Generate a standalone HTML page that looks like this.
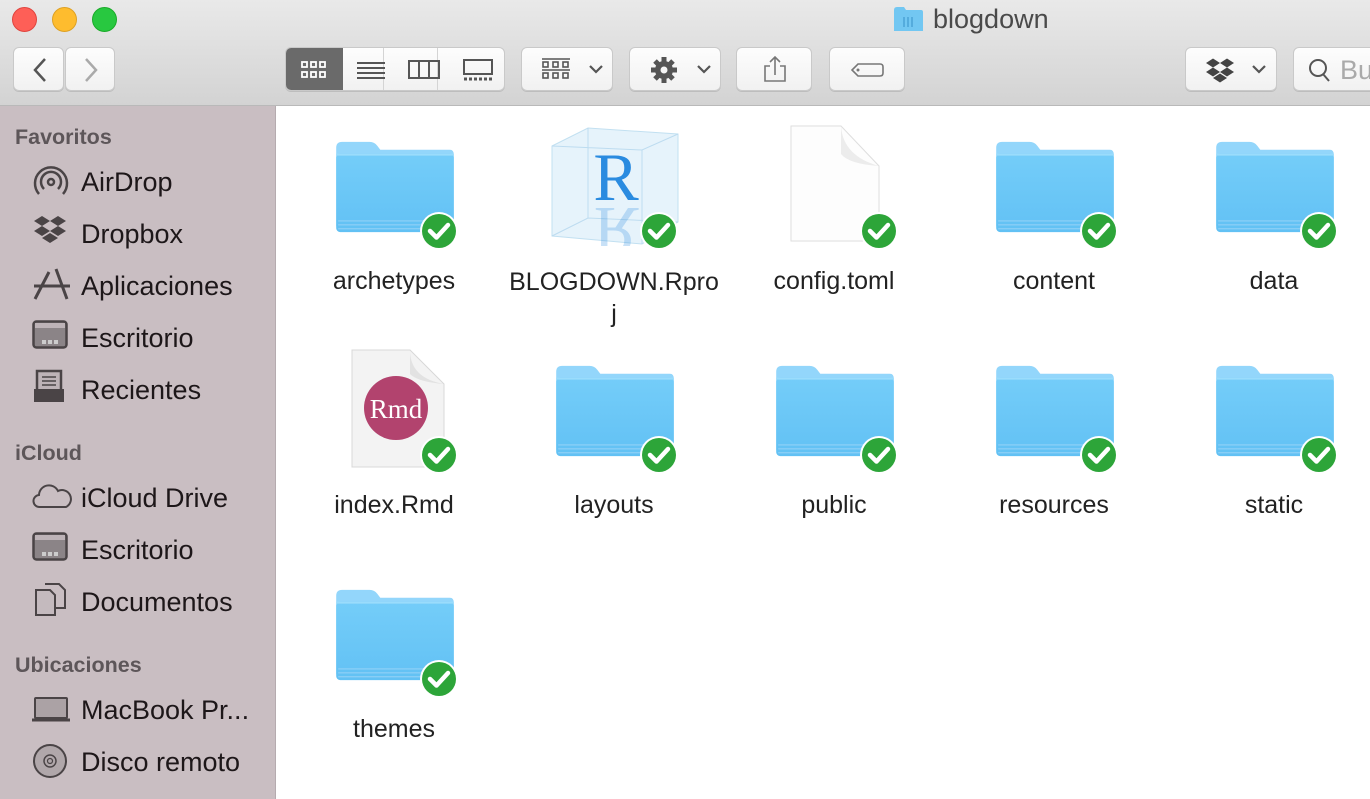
<!DOCTYPE html>
<html><head><meta charset="utf-8">
<style>
*{margin:0;padding:0;box-sizing:border-box}
body{width:1370px;height:799px;overflow:hidden;position:relative;font-family:"Liberation Sans",sans-serif;background:#fff}
.tb{position:absolute;left:0;top:0;width:1370px;height:106px;background:linear-gradient(#e9e9e9,#d3d3d3);border-bottom:1px solid #b9b9b9}
.light{position:absolute;top:7px;width:25px;height:25px;border-radius:50%}
.btn{position:absolute;top:47px;height:44px;background:linear-gradient(#fdfdfd,#f1f1f1);border:1px solid #c9c9c9;border-radius:6px;box-shadow:0 1px 0 #bdbdbd}
.title{position:absolute;left:933px;top:4px;font-size:27px;color:#4a4a4a}
.side{position:absolute;left:0;top:106px;width:276px;height:693px;background:#c9bec2;border-right:1px solid #b5abaf}
.sh{position:absolute;left:15px;font-size:21.5px;color:#5d5659;font-weight:bold}
.si{position:absolute;left:81px;font-size:27px;color:#1d1719;line-height:32px}
.ic{position:absolute;left:32px}
.lbl{position:absolute;width:220px;text-align:center;font-size:25px;color:#222;line-height:30px}
.it{position:absolute}
</style></head><body>
<svg width="0" height="0" style="position:absolute">
<defs>
<linearGradient id="fg" x1="0" y1="0" x2="0" y2="1"><stop offset="0" stop-color="#74cdf9"/><stop offset="1" stop-color="#62c1f4"/></linearGradient>
<symbol id="folder" viewBox="0 0 124 100">
<path d="M2 10 Q2 4 8 4 L36 4 Q41 4 44 8 L47 12 L118 12 Q122 12 122 17 L122 90 L2 90 Z" fill="#93d6fb"/>
<rect x="2" y="16" width="120" height="80" rx="4" fill="url(#fg)"/>
<rect x="2" y="16" width="120" height="2" fill="#9adcfc"/>
<rect x="4" y="84" width="116" height="1.2" fill="#8fd0f7"/>
<rect x="4" y="88" width="116" height="1.2" fill="#8fd0f7"/>
<rect x="4" y="92" width="116" height="1.2" fill="#8fd0f7"/>
</symbol>
<symbol id="chk" viewBox="0 0 40 40">
<circle cx="20" cy="20" r="19" fill="#fff"/>
<circle cx="20" cy="20" r="17" fill="#2da539"/>
<path d="M11 20 L17.5 26.5 L29 14" stroke="#fff" stroke-width="4.5" fill="none" stroke-linecap="round" stroke-linejoin="round"/>
</symbol>
</defs></svg>

<div class="tb">
<div class="light" style="left:12px;background:#fe5f57;border:1px solid #e0443e"></div>
<div class="light" style="left:52px;background:#febc2e;border:1px solid #dea123"></div>
<div class="light" style="left:92px;background:#28c840;border:1px solid #1aab29"></div>
<svg style="position:absolute;left:894px;top:7px" width="29" height="24"><path d="M0 3 Q0 0 3 0 L10 0 L12 3 L27 3 Q29 3 29 5 L29 24 L0 24Z" fill="#72c7f2"/><path d="M10 10v10M14 10v10M18 10v10" stroke="#4aa4d6" stroke-width="1.5"/></svg>
<div class="title">blogdown</div>
<div class="btn" style="left:13px;width:51px"><svg width="51" height="44"><path d="M31 11 L21 22 L31 33" stroke="#555" stroke-width="2.5" fill="none"/></svg></div>
<div class="btn" style="left:65px;width:50px"><svg width="50" height="44"><path d="M20 11 L30 22 L20 33" stroke="#aaa" stroke-width="2.5" fill="none"/></svg></div>
<div class="btn" style="left:285px;width:220px;overflow:hidden">
<div style="position:absolute;left:0;top:0;width:57px;height:44px;background:#6a6a6a"></div>
<div style="position:absolute;left:97px;top:0;width:1px;height:44px;background:#d4d4d4"></div>
<div style="position:absolute;left:151px;top:0;width:1px;height:44px;background:#d4d4d4"></div>
<svg style="position:absolute;left:0;top:0" width="220" height="44">
<g fill="none" stroke="#fff" stroke-width="1.8"><rect x="16" y="14" width="5" height="5"/><rect x="25" y="14" width="5" height="5"/><rect x="34" y="14" width="5" height="5"/><rect x="16" y="24" width="5" height="5"/><rect x="25" y="24" width="5" height="5"/><rect x="34" y="24" width="5" height="5"/></g>
<g stroke="#555" stroke-width="2"><path d="M71 15h28M71 20h28M71 25h28M71 30h28"/></g>
<rect x="123" y="13" width="30" height="17" fill="none" stroke="#555" stroke-width="2"/><path d="M133 13v17M143 13v17" stroke="#555" stroke-width="2"/>
<rect x="178" y="12" width="28" height="14" fill="none" stroke="#555" stroke-width="2"/><path d="M178 31h28" stroke="#555" stroke-width="3" stroke-dasharray="3 2"/>
</svg></div>
<div class="btn" style="left:521px;width:92px"><svg width="92" height="44"><path d="M20 11h28M20 22h28" stroke="#555" stroke-width="1.5"/><g fill="none" stroke="#555" stroke-width="1.6"><rect x="21" y="14" width="5" height="5"/><rect x="31" y="14" width="5" height="5"/><rect x="41" y="14" width="5" height="5"/><rect x="21" y="25" width="5" height="5"/><rect x="31" y="25" width="5" height="5"/><rect x="41" y="25" width="5" height="5"/></g><path d="M68 18l6 6 6-6" stroke="#555" stroke-width="2.2" fill="none"/></svg></div>
<div class="btn" style="left:629px;width:92px"><svg width="92" height="44"><g transform="translate(34 22)"><circle r="9" fill="#555"/><g stroke="#555" stroke-width="5"><path d="M0 -13V13M-13 0H13M-9 -9L9 9M-9 9L9 -9"/></g><circle r="3.5" fill="#f5f5f5"/></g><path d="M68 18l6 6 6-6" stroke="#555" stroke-width="2.2" fill="none"/></svg></div>
<div class="btn" style="left:736px;width:76px"><svg width="76" height="44"><path d="M33 18h-5v15h20v-15h-5M38 27V9M33 14l5-5 5 5" stroke="#777" stroke-width="1.6" fill="none"/></svg></div>
<div class="btn" style="left:829px;width:76px"><svg width="76" height="44"><path d="M28 16h22q3 0 3 3v6q0 3-3 3h-22l-6-6z" stroke="#777" stroke-width="1.6" fill="none"/><circle cx="28" cy="22" r="1.5" fill="#777"/></svg></div>
<div class="btn" style="left:1185px;width:92px"><svg width="92" height="44"><g fill="#444"><path d="M20 15l7-4.5 7 4.5-7 4.5zM34 15l7-4.5 7 4.5-7 4.5zM20 24l7-4.5 7 4.5-7 4.5zM34 24l7-4.5 7 4.5-7 4.5zM27 30l7-4.5 7 4.5-7 4.5z"/></g><path d="M67 18l6 6 6-6" stroke="#555" stroke-width="2.2" fill="none"/></svg></div>
<div class="btn" style="left:1293px;width:90px"><svg width="90" height="44"><circle cx="24" cy="20" r="8" stroke="#555" stroke-width="2" fill="none"/><path d="M29 26l6 7" stroke="#555" stroke-width="2"/></svg><span style="position:absolute;left:46px;top:7px;font-size:27px;color:#aaa">Bu</span></div>
</div>

<div class="side">
<div class="sh" style="top:19px">Favoritos</div>
<svg class="ic" style="top:58px" width="38" height="36"><g fill="none" stroke="#4a4446" stroke-width="2.5"><circle cx="19" cy="18" r="3"/><path d="M12 25a10 10 0 1 1 14 0M7 30a16 16 0 1 1 24 0"/></g></svg>
<div class="si" style="top:60px">AirDrop</div>
<svg class="ic" style="top:108px" width="38" height="36"><g fill="#4a4446"><path d="M2 7l8-5 8 5-8 5zM18 7l8-5 8 5-8 5zM2 17l8-5 8 5-8 5zM18 17l8-5 8 5-8 5zM10 24l8-5 8 5-8 5z"/></g></svg>
<div class="si" style="top:112px">Dropbox</div>
<svg class="ic" style="top:160px" width="40" height="36"><g stroke="#4a4446" stroke-width="3" fill="none"><path d="M3 33L17 6M24 3l11 30M2 20h36"/></g></svg>
<div class="si" style="top:164px">Aplicaciones</div>
<svg class="ic" style="top:214px" width="38" height="32"><rect x="1.5" y="1.5" width="33" height="26" rx="3" fill="#8b8487" stroke="#4a4446" stroke-width="2.5"/><rect x="3" y="3" width="30" height="5" fill="#bdb3b7"/><g fill="#ccc"><rect x="10" y="20" width="4" height="4"/><rect x="16" y="20" width="4" height="4"/><rect x="22" y="20" width="4" height="4"/></g></svg>
<div class="si" style="top:216px">Escritorio</div>
<svg class="ic" style="top:263px" width="38" height="36"><path d="M5 2h24v20H5z" fill="#bdb3b7" stroke="#4a4446" stroke-width="2.5"/><path d="M10 8h14M10 12h14M10 16h14" stroke="#4a4446" stroke-width="1.5"/><path d="M2 20h30v13H2z" fill="#4a4446"/></svg>
<div class="si" style="top:268px">Recientes</div>
<div class="sh" style="top:335px">iCloud</div>
<svg class="ic" style="top:375px" width="40" height="30"><path d="M8 26a6 6 0 0 1-1-12 10 10 0 0 1 19-4 8 8 0 0 1 8 16z" fill="none" stroke="#4a4446" stroke-width="2"/></svg>
<div class="si" style="top:376px">iCloud Drive</div>
<svg class="ic" style="top:426px" width="38" height="32"><rect x="1.5" y="1.5" width="33" height="26" rx="3" fill="#8b8487" stroke="#4a4446" stroke-width="2.5"/><rect x="3" y="3" width="30" height="5" fill="#bdb3b7"/><g fill="#ccc"><rect x="10" y="20" width="4" height="4"/><rect x="16" y="20" width="4" height="4"/><rect x="22" y="20" width="4" height="4"/></g></svg>
<div class="si" style="top:428px">Escritorio</div>
<svg class="ic" style="top:476px" width="38" height="36"><path d="M4 8h14l5 5v20H4z" fill="#c4babe" stroke="#4a4446" stroke-width="2"/><path d="M13 2h14l6 6v18H23" fill="none" stroke="#4a4446" stroke-width="2"/></svg>
<div class="si" style="top:480px">Documentos</div>
<div class="sh" style="top:547px">Ubicaciones</div>
<svg class="ic" style="top:590px" width="40" height="28"><rect x="3" y="2" width="32" height="20" rx="1" fill="#aba2a5" stroke="#4a4446" stroke-width="2"/><path d="M0 24h38" stroke="#4a4446" stroke-width="3"/></svg>
<div class="si" style="top:588px">MacBook Pr...</div>
<svg class="ic" style="top:636px" width="38" height="38"><circle cx="18" cy="19" r="16" fill="#b0a7aa" stroke="#4a4446" stroke-width="2"/><circle cx="18" cy="19" r="6" fill="none" stroke="#4a4446" stroke-width="1.5"/><circle cx="18" cy="19" r="2.5" fill="none" stroke="#4a4446" stroke-width="1.2"/></svg>
<div class="si" style="top:640px">Disco remoto</div>
</div>

<svg class="it" style="left:334px;top:138px" width="122" height="98"><use href="#folder"/></svg>
<svg class="it" style="left:550px;top:126px" width="130" height="120"><path d="M2 20L38 2 128 8 128 96 92 118 2 110Z" fill="#e6f3fb" stroke="#c2e0f1"/><path d="M38 2v90M2 110L38 92 128 96M92 118V24M2 20L92 24 128 8" stroke="#bddcf0" fill="none"/><text x="66" y="74" font-family="Liberation Serif,serif" font-size="68" fill="#2a8be0" text-anchor="middle">R</text><text x="66" y="78" font-family="Liberation Serif,serif" font-size="68" fill="#2a8be0" opacity=".25" text-anchor="middle" transform="scale(1,-1) translate(0,-160)">R</text></svg>
<svg class="it" style="left:789px;top:124px" width="92" height="120"><path d="M2 2h50l38 40v75H2z" fill="#fdfdfd" stroke="#dedede"/><path d="M52 2q2 30 38 40q-30-2-38-12z" fill="#ececec"/></svg>
<svg class="it" style="left:994px;top:138px" width="122" height="98"><use href="#folder"/></svg>
<svg class="it" style="left:1214px;top:138px" width="122" height="98"><use href="#folder"/></svg>
<svg class="it" style="left:350px;top:348px" width="96" height="122"><path d="M2 2h58l34 34v83H2z" fill="#f3f3f3" stroke="#d8d8d8"/><path d="M60 2q0 28 34 34q-26-2-34-10z" fill="#e2e2e2"/><circle cx="46" cy="60" r="32" fill="#b2436e"/><text x="46" y="70" font-family="Liberation Serif,serif" font-size="27" fill="#fff" text-anchor="middle">Rmd</text></svg>
<svg class="it" style="left:554px;top:362px" width="122" height="98"><use href="#folder"/></svg>
<svg class="it" style="left:774px;top:362px" width="122" height="98"><use href="#folder"/></svg>
<svg class="it" style="left:994px;top:362px" width="122" height="98"><use href="#folder"/></svg>
<svg class="it" style="left:1214px;top:362px" width="122" height="98"><use href="#folder"/></svg>
<svg class="it" style="left:334px;top:586px" width="122" height="98"><use href="#folder"/></svg>

<svg class="it" style="left:419px;top:211px" width="40" height="40"><use href="#chk"/></svg>
<svg class="it" style="left:639px;top:211px" width="40" height="40"><use href="#chk"/></svg>
<svg class="it" style="left:859px;top:211px" width="40" height="40"><use href="#chk"/></svg>
<svg class="it" style="left:1079px;top:211px" width="40" height="40"><use href="#chk"/></svg>
<svg class="it" style="left:1299px;top:211px" width="40" height="40"><use href="#chk"/></svg>
<svg class="it" style="left:419px;top:435px" width="40" height="40"><use href="#chk"/></svg>
<svg class="it" style="left:639px;top:435px" width="40" height="40"><use href="#chk"/></svg>
<svg class="it" style="left:859px;top:435px" width="40" height="40"><use href="#chk"/></svg>
<svg class="it" style="left:1079px;top:435px" width="40" height="40"><use href="#chk"/></svg>
<svg class="it" style="left:1299px;top:435px" width="40" height="40"><use href="#chk"/></svg>
<svg class="it" style="left:419px;top:659px" width="40" height="40"><use href="#chk"/></svg>

<div class="lbl" style="left:284px;top:266px">archetypes</div>
<div class="lbl" style="left:494px;top:266px;width:240px;line-height:32px">BLOGDOWN.Rpro<br>j</div>
<div class="lbl" style="left:724px;top:266px">config.toml</div>
<div class="lbl" style="left:944px;top:266px">content</div>
<div class="lbl" style="left:1164px;top:266px">data</div>
<div class="lbl" style="left:284px;top:490px">index.Rmd</div>
<div class="lbl" style="left:504px;top:490px">layouts</div>
<div class="lbl" style="left:724px;top:490px">public</div>
<div class="lbl" style="left:944px;top:490px">resources</div>
<div class="lbl" style="left:1164px;top:490px">static</div>
<div class="lbl" style="left:284px;top:714px">themes</div>
</body></html>
